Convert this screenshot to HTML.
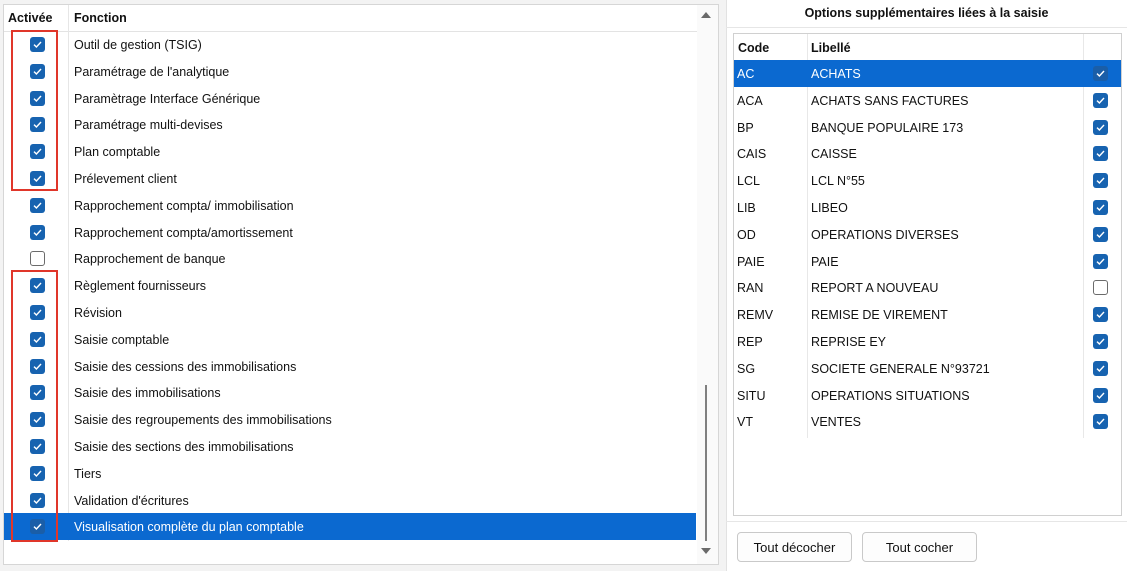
<!DOCTYPE html>
<html><head><meta charset="utf-8"><style>
*{margin:0;padding:0;box-sizing:border-box}
body{width:1127px;height:571px;background:#f3f3f3;font-family:"Liberation Sans",sans-serif;font-size:12.5px;color:#111;position:relative;overflow:hidden}
.abs{position:absolute}
.lp{left:3px;top:4px;width:716px;height:561px;background:#fff;border:1px solid #d6d6d6}
.hdr{font-weight:bold;font-size:12.5px}
.row{position:absolute;height:27px;line-height:28px;white-space:nowrap}
.cb{position:absolute;width:15px;height:15px;border-radius:3px;background:#1763b0}
.cb svg{position:absolute;left:2px;top:2px}
.cb.off{background:#fff;border:1.3px solid #6b6b6b}
.sel{background:#0b69d0;color:#fff}
.sel .cb{background:#1a5ea8}
.red{position:absolute;border:2px solid #e0362a}
.rp{left:726px;top:0;width:401px;height:571px;background:#fff;border-left:1px solid #e2e2e2}
.btn{position:absolute;height:30px;border:1px solid #c9c9c9;border-radius:4px;background:#fdfdfd;text-align:center;line-height:30px;font-size:13px}
</style></head><body>
<div class="abs lp"></div>
<div class="abs" style="left:4px;top:5px;width:693px;height:27px;border-bottom:1px solid #e3e3e3"></div>
<div class="abs hdr" style="left:8px;top:11px">Activée</div>
<div class="abs hdr" style="left:74px;top:11px">Fonction</div>
<div class="abs" style="left:68px;top:5px;width:1px;height:536px;background:#e6e6e6"></div>
<div class="abs" style="left:697px;top:5px;width:21px;height:559px;background:#fafafa"></div>
<div class="abs" style="left:701px;top:12px;width:0;height:0;border-left:5px solid transparent;border-right:5px solid transparent;border-bottom:6px solid #6a6a6a"></div>
<div class="abs" style="left:701px;top:548px;width:0;height:0;border-left:5px solid transparent;border-right:5px solid transparent;border-top:6px solid #6a6a6a"></div>
<div class="abs" style="left:705px;top:385px;width:2px;height:156px;background:#808080"></div>
<div id="L"></div>
<div class="red" style="left:11px;top:30px;width:47px;height:161px"></div>
<div class="red" style="left:11px;top:270px;width:47px;height:272px"></div>

<div class="abs rp"></div>
<div class="abs hdr" style="left:726px;top:6px;width:401px;text-align:center">Options supplémentaires liées à la saisie</div>
<div class="abs" style="left:726px;top:27px;width:401px;height:1px;background:#e6e6e6"></div>
<div class="abs" style="left:733px;top:33px;width:389px;height:483px;border:1px solid #d0d0d0"></div>
<div class="abs hdr" style="left:738px;top:41px">Code</div>
<div class="abs hdr" style="left:811px;top:41px">Libellé</div>
<div class="abs" style="left:734px;top:60px;width:387px;height:1px;background:#e6e6e6"></div>
<div class="abs" style="left:807px;top:34px;width:1px;height:404px;background:#e8e8e8"></div>
<div class="abs" style="left:1083px;top:34px;width:1px;height:404px;background:#e8e8e8"></div>
<div id="R"></div>
<div class="abs" style="left:726px;top:521px;width:401px;height:1px;background:#e6e6e6"></div>
<div class="btn" style="left:737px;top:532px;width:115px">Tout décocher</div>
<div class="btn" style="left:862px;top:532px;width:115px">Tout cocher</div>
<script>
var ck='<svg width="11" height="11" viewBox="0 0 11 11"><path d="M2 5.6 L4.4 8 L9 3" fill="none" stroke="#fff" stroke-width="1.4"/></svg>';
var L=["Outil de gestion (TSIG)","Paramétrage de l'analytique","Paramètrage Interface Générique","Paramétrage multi-devises","Plan comptable","Prélevement client","Rapprochement compta/ immobilisation","Rapprochement compta/amortissement","Rapprochement de banque","Règlement fournisseurs","Révision","Saisie comptable","Saisie des cessions des immobilisations","Saisie des immobilisations","Saisie des regroupements des immobilisations","Saisie des sections des immobilisations","Tiers","Validation d'écritures","Visualisation complète du plan comptable"];
var h='';
L.forEach(function(t,i){var y=31+i*26.8;var sel=i==18;var off=i==8;
h+='<div class="row'+(sel?' sel':'')+'" style="left:4px;top:'+y+'px;width:692px"><div class="cb'+(off?' off':'')+'" style="left:26px;top:6px">'+(off?'':ck)+'</div><span style="position:absolute;left:70px">'+t+'</span></div>';});
document.getElementById('L').innerHTML=h;
var R=[["AC","ACHATS"],["ACA","ACHATS SANS FACTURES"],["BP","BANQUE POPULAIRE 173"],["CAIS","CAISSE"],["LCL","LCL N°55"],["LIB","LIBEO"],["OD","OPERATIONS DIVERSES"],["PAIE","PAIE"],["RAN","REPORT A NOUVEAU"],["REMV","REMISE DE VIREMENT"],["REP","REPRISE EY"],["SG","SOCIETE GENERALE N°93721"],["SITU","OPERATIONS SITUATIONS"],["VT","VENTES"]];
h='';
R.forEach(function(r,i){var y=60+i*26.8;var sel=i==0;var off=i==8;
h+='<div class="row'+(sel?' sel':'')+'" style="left:734px;top:'+y+'px;width:387px"><span style="position:absolute;left:3px">'+r[0]+'</span><span style="position:absolute;left:77px">'+r[1]+'</span><div class="cb'+(off?' off':'')+'" style="left:359px;top:6px">'+(off?'':ck)+'</div></div>';});
document.getElementById('R').innerHTML=h;
</script>
</body></html>
